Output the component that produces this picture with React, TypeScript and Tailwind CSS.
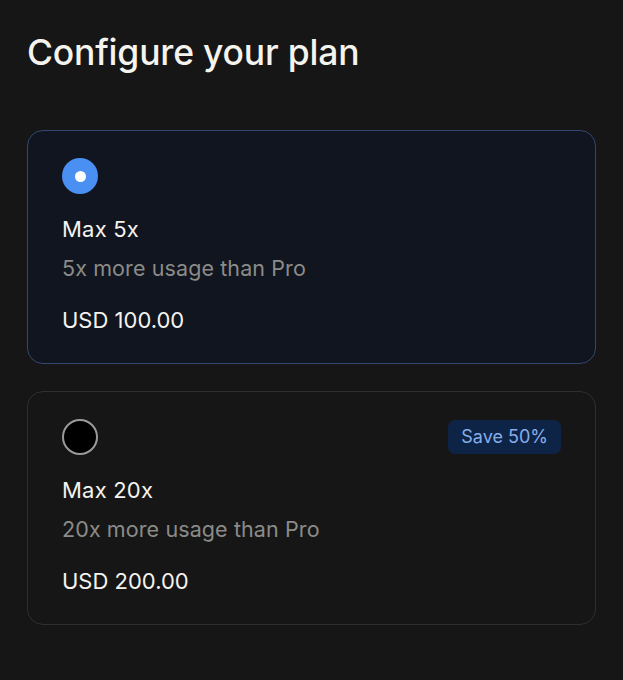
import { useState } from 'react';

type Plan = {
  id: string;
  name: string;
  desc: string;
  price: string;
  badge?: string;
};

const plans: Plan[] = [
  { id: 'max5', name: 'Max 5x', desc: '5x more usage than Pro', price: 'USD 100.00' },
  { id: 'max20', name: 'Max 20x', desc: '20x more usage than Pro', price: 'USD 200.00', badge: 'Save 50%' },
];

export default function App() {
  const [selected, setSelected] = useState('max5');

  return (
    <main
      className="min-h-[680px] w-full bg-[#161616] px-[27px] pt-[30px] pb-10 text-[#f4f3ee]"
      style={{ fontFamily: 'Inter, "Noto Sans", sans-serif' }}
    >
      <h1 className="text-[35.5px] leading-[46px] font-medium tracking-[-0.2px]">Configure your plan</h1>

      <div className="mt-[54px] flex flex-col gap-[27px]">
        {plans.map(plan => {
          const active = plan.id === selected;
          return (
            <button
              key={plan.id}
              onClick={() => setSelected(plan.id)}
              className={`flex w-full flex-col items-start rounded-[16px] border px-[34px] pt-[27px] pb-[28px] text-left ${
                active ? 'border-[#34476e] bg-[#10151f]' : 'border-[#2f2f2f] bg-[#161616]'
              }`}
            >
              <div className="flex h-9 w-full items-center justify-between">
                {active ? (
                  <span className="flex h-9 w-9 items-center justify-center rounded-full bg-[#4a90f2]">
                    <span className="h-[11px] w-[11px] rounded-full bg-white" />
                  </span>
                ) : (
                  <span className="h-9 w-9 rounded-full border-2 border-[#9a9a9a] bg-black" />
                )}
                {plan.badge && (
                  <span className="rounded-[7px] bg-[#0e2446] px-[13px] py-[3px] text-[18px] leading-[28px] text-[#86acea]">
                    {plan.badge}
                  </span>
                )}
              </div>
              <p className="mt-[20px] text-[22px] leading-[30px] font-normal tracking-[0.2px]">{plan.name}</p>
              <p className="mt-[9px] text-[21.5px] leading-[30px] text-[#8b8b88] tracking-[0.1px]">{plan.desc}</p>
              <p className="mt-[22px] text-[22px] leading-[30px]">{plan.price}</p>
            </button>
          );
        })}
      </div>
    </main>
  );
}
